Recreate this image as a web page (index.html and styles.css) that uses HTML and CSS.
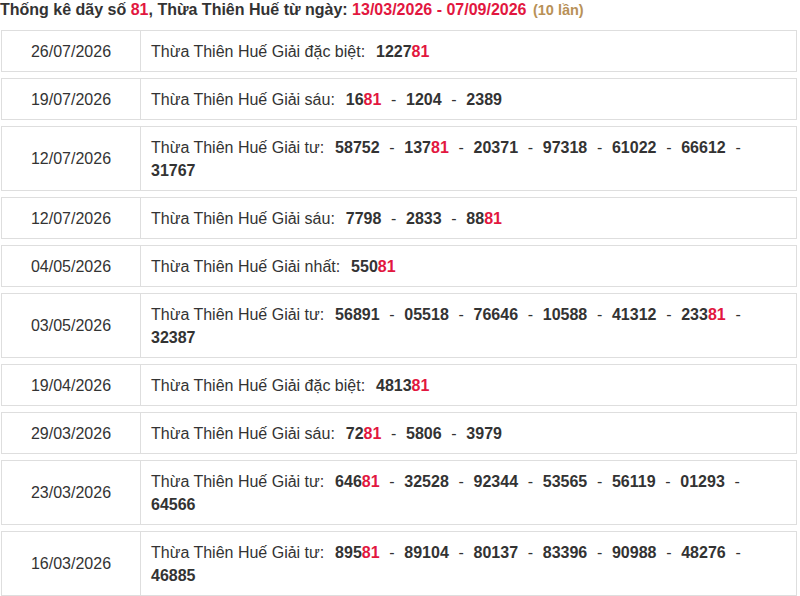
FILE: index.html
```html
<!DOCTYPE html>
<html lang="vi">
<head>
<meta charset="utf-8">
<link rel="stylesheet" href="styles.css">
</head>
<body>
<h2 class="title">Thống kê dãy số <span class="red">81</span>, Thừa Thiên Huế từ ngày: <span class="red">13/03/2026 - 07/09/2026</span> <span class="count">(10 lần)</span></h2>
<div class="list">
  <div class="row"><div class="date">26/07/2026</div><div class="info">Thừa Thiên Huế Giải đặc biệt:&nbsp; <span class="nums"><b>1227<span class="red">81</span></b></span></div></div>
  <div class="row"><div class="date">19/07/2026</div><div class="info">Thừa Thiên Huế Giải sáu:&nbsp; <span class="nums"><b>16<span class="red">81</span></b> &nbsp;-&nbsp; <b>1204</b> &nbsp;-&nbsp; <b>2389</b></span></div></div>
  <div class="row"><div class="date">12/07/2026</div><div class="info">Thừa Thiên Huế Giải tư:&nbsp; <span class="nums"><b>58752</b> &nbsp;-&nbsp; <b>137<span class="red">81</span></b> &nbsp;-&nbsp; <b>20371</b> &nbsp;-&nbsp; <b>97318</b> &nbsp;-&nbsp; <b>61022</b> &nbsp;-&nbsp; <b>66612</b> &nbsp;-&nbsp; <b>31767</b></span></div></div>
  <div class="row"><div class="date">12/07/2026</div><div class="info">Thừa Thiên Huế Giải sáu:&nbsp; <span class="nums"><b>7798</b> &nbsp;-&nbsp; <b>2833</b> &nbsp;-&nbsp; <b>88<span class="red">81</span></b></span></div></div>
  <div class="row"><div class="date">04/05/2026</div><div class="info">Thừa Thiên Huế Giải nhất:&nbsp; <span class="nums"><b>550<span class="red">81</span></b></span></div></div>
  <div class="row"><div class="date">03/05/2026</div><div class="info">Thừa Thiên Huế Giải tư:&nbsp; <span class="nums"><b>56891</b> &nbsp;-&nbsp; <b>05518</b> &nbsp;-&nbsp; <b>76646</b> &nbsp;-&nbsp; <b>10588</b> &nbsp;-&nbsp; <b>41312</b> &nbsp;-&nbsp; <b>233<span class="red">81</span></b> &nbsp;-&nbsp; <b>32387</b></span></div></div>
  <div class="row"><div class="date">19/04/2026</div><div class="info">Thừa Thiên Huế Giải đặc biệt:&nbsp; <span class="nums"><b>4813<span class="red">81</span></b></span></div></div>
  <div class="row"><div class="date">29/03/2026</div><div class="info">Thừa Thiên Huế Giải sáu:&nbsp; <span class="nums"><b>72<span class="red">81</span></b> &nbsp;-&nbsp; <b>5806</b> &nbsp;-&nbsp; <b>3979</b></span></div></div>
  <div class="row"><div class="date">23/03/2026</div><div class="info">Thừa Thiên Huế Giải tư:&nbsp; <span class="nums"><b>646<span class="red">81</span></b> &nbsp;-&nbsp; <b>32528</b> &nbsp;-&nbsp; <b>92344</b> &nbsp;-&nbsp; <b>53565</b> &nbsp;-&nbsp; <b>56119</b> &nbsp;-&nbsp; <b>01293</b> &nbsp;-&nbsp; <b>64566</b></span></div></div>
  <div class="row"><div class="date">16/03/2026</div><div class="info">Thừa Thiên Huế Giải tư:&nbsp; <span class="nums"><b>895<span class="red">81</span></b> &nbsp;-&nbsp; <b>89104</b> &nbsp;-&nbsp; <b>80137</b> &nbsp;-&nbsp; <b>83396</b> &nbsp;-&nbsp; <b>90988</b> &nbsp;-&nbsp; <b>48276</b> &nbsp;-&nbsp; <b>46885</b></span></div></div>
</div>
</body>
</html>
```
FILE: styles.css
```css
html, body {
  margin: 0;
  padding: 0;
  background: #fff;
}
body {
  font-family: "Liberation Sans", Arial, sans-serif;
  color: #333;
  font-size: 16px;
}
.title {
  margin: 0 0 10px 0;
  font-size: 16px;
  line-height: 20px;
  font-weight: bold;
  color: #333;
  white-space: nowrap;
}
.red {
  color: #e2173f;
}
.count {
  color: #b89157;
  font-size: 14.5px;
  margin-left: 2px;
}
.list {
  display: flex;
  flex-direction: column;
  gap: 6px;
  padding: 0 3px 0 1px;
}
.row {
  display: grid;
  grid-template-columns: 139px 1fr;
  border: 1px solid #dedede;
}
.date {
  border-right: 1px solid #dedede;
  display: flex;
  align-items: center;
  justify-content: center;
  line-height: 23px;
}
.info {
  padding: 9px 40px 8px 10px;
  line-height: 23px;
}
.nums {
  word-spacing: 0.4px;
}
.nums > b:first-child {
  margin-left: 2px;
}
.info b {
  font-weight: bold;
}
```
